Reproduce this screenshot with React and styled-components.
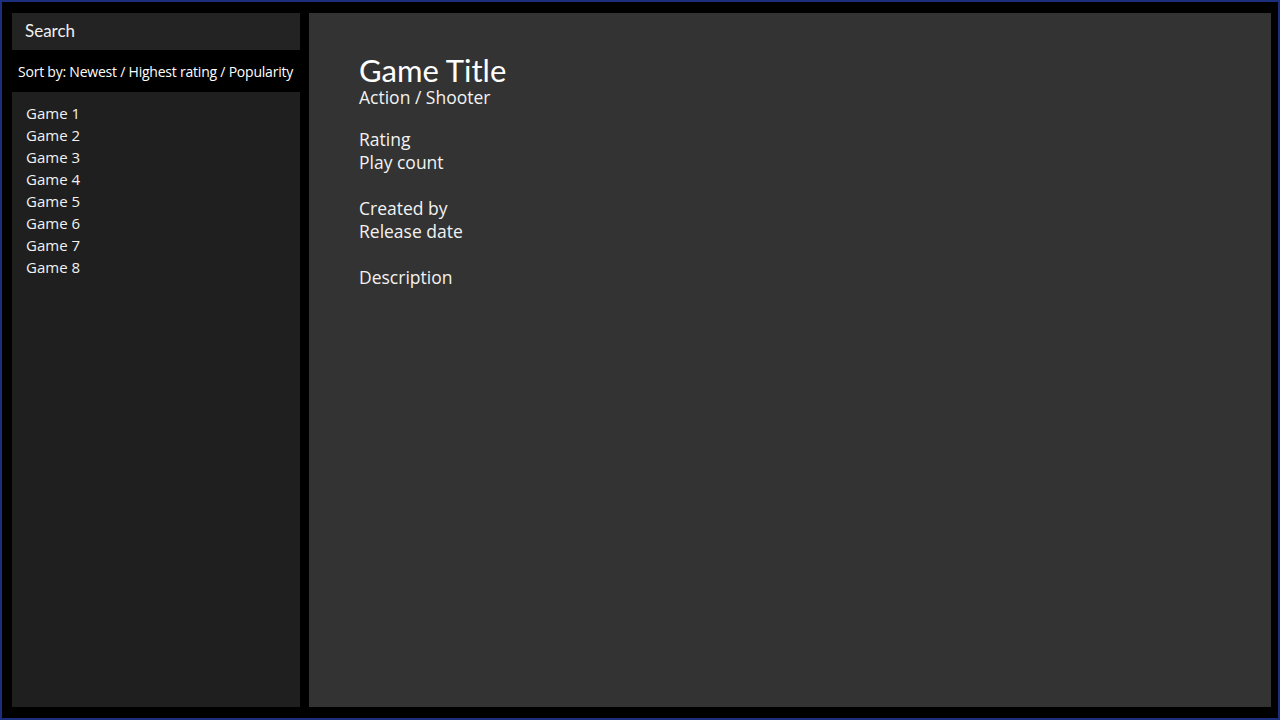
import React from 'react'
import styled, { createGlobalStyle } from 'styled-components'

const GlobalStyle = createGlobalStyle`
  html, body {
    margin: 0;
    padding: 0;
    background: #000;
  }
  body {
    font-family: "Open Sans", "Noto Sans", sans-serif;
    color: #fff;
  }
`

const games = ['Game 1', 'Game 2', 'Game 3', 'Game 4', 'Game 5', 'Game 6', 'Game 7', 'Game 8']

const App = () => {
    return (
        <>
            <GlobalStyle />
            <Frame>
                <Sidebar>
                    <SearchBox>Search</SearchBox>
                    <SortBar>Sort by: Newest / Highest rating / Popularity</SortBar>
                    <GameList>
                        {games.map((game) => (
                            <GameItem key={game}>{game}</GameItem>
                        ))}
                    </GameList>
                </Sidebar>
                <Details>
                    <Header>
                        <Title>Game Title</Title>
                        <Genre>Action / Shooter</Genre>
                    </Header>
                    <Group>
                        <Line>Rating</Line>
                        <Line>Play count</Line>
                    </Group>
                    <Group>
                        <Line>Created by</Line>
                        <Line>Release date</Line>
                    </Group>
                    <Group>
                        <Line>Description</Line>
                    </Group>
                </Details>
            </Frame>
        </>
    )
}

export default App

const Frame = styled.div`
  box-sizing: border-box;
  width: 1280px;
  height: 720px;
  border: 2px solid #1b2f7c;
  background: #000;
  padding: 11px 7px 11px 10px;
  display: flex;
  gap: 9px;
`

const Sidebar = styled.div`
  width: 288px;
  display: flex;
  flex-direction: column;
  flex-shrink: 0;
`

const SearchBox = styled.div`
  height: 37px;
  background: #232323;
  display: flex;
  align-items: center;
  padding-left: 13px;
  padding-bottom: 3px;
  box-sizing: border-box;
  font-family: "Lato", "Open Sans", sans-serif;
  font-size: 17px;
  color: #f0f0f0;
`

const SortBar = styled.div`
  height: 42px;
  display: flex;
  align-items: center;
  padding-left: 6px;
  font-size: 14px;
  letter-spacing: -0.22px;
  white-space: nowrap;
  color: #fff;
`

const GameList = styled.div`
  flex: 1;
  background: #1f1f1f;
  padding: 10px 14px;
`

const GameItem = styled.div`
  font-size: 15px;
  line-height: 22px;
  color: #f2f2f2;
`

const Details = styled.div`
  flex: 1;
  background: #333333;
  padding: 40px 50px;
`

const Header = styled.div`
  margin-bottom: 21px;
`

const Title = styled.div`
  font-family: "Lato", "Open Sans", sans-serif;
  font-size: 31px;
  line-height: 34px;
  color: #fff;
`

const Genre = styled.div`
  font-size: 17.5px;
  line-height: 20px;
  color: #f2f2f2;
`

const Group = styled.div`
  margin-bottom: 23px;
`

const Line = styled.div`
  font-size: 17.5px;
  line-height: 23px;
  color: #f2f2f2;
`
